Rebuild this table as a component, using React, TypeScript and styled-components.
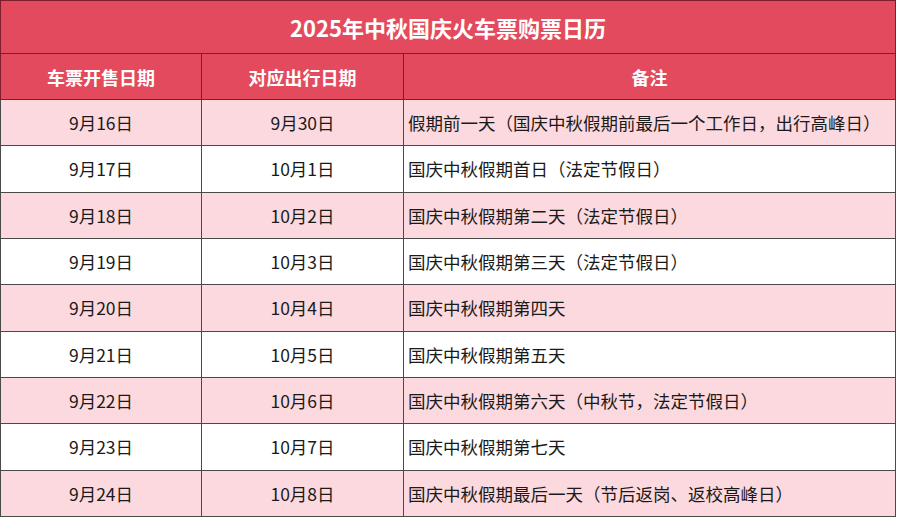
import styled, { createGlobalStyle } from 'styled-components'

const GlobalStyle = createGlobalStyle`
  html, body {
    margin: 0;
    padding: 0;
    background: #ffffff;
  }
  body {
    font-family: "Noto Sans CJK SC", "Noto Sans", sans-serif;
  }
`

interface Row {
  readonly sale: string
  readonly travel: string
  readonly note: string
}

const rows: readonly Row[] = [
  { sale: '9月16日', travel: '9月30日', note: '假期前一天（国庆中秋假期前最后一个工作日，出行高峰日）' },
  { sale: '9月17日', travel: '10月1日', note: '国庆中秋假期首日（法定节假日）' },
  { sale: '9月18日', travel: '10月2日', note: '国庆中秋假期第二天（法定节假日）' },
  { sale: '9月19日', travel: '10月3日', note: '国庆中秋假期第三天（法定节假日）' },
  { sale: '9月20日', travel: '10月4日', note: '国庆中秋假期第四天' },
  { sale: '9月21日', travel: '10月5日', note: '国庆中秋假期第五天' },
  { sale: '9月22日', travel: '10月6日', note: '国庆中秋假期第六天（中秋节，法定节假日）' },
  { sale: '9月23日', travel: '10月7日', note: '国庆中秋假期第七天' },
  { sale: '9月24日', travel: '10月8日', note: '国庆中秋假期最后一天（节后返岗、返校高峰日）' },
]

export default function App() {
  return (
    <>
      <GlobalStyle />
      <Calendar>
        <colgroup>
          <col style={{ width: 201 }} />
          <col style={{ width: 202 }} />
          <col />
        </colgroup>
        <thead>
          <tr>
            <Title colSpan={3}>2025年中秋国庆火车票购票日历</Title>
          </tr>
          <tr>
            <HeadCell>车票开售日期</HeadCell>
            <HeadCell>对应出行日期</HeadCell>
            <HeadCell>备注</HeadCell>
          </tr>
        </thead>
        <tbody>
          {rows.map((row, i) => (
            <BodyRow key={row.sale} $pink={i % 2 === 0}>
              <Cell>{row.sale}</Cell>
              <Cell>{row.travel}</Cell>
              <Cell $left>{row.note}</Cell>
            </BodyRow>
          ))}
        </tbody>
      </Calendar>
    </>
  )
}

const Calendar = styled.table`
  width: 896px;
  border-collapse: collapse;
  table-layout: fixed;
  color: #1a1a1a;
`

const Title = styled.th`
  height: 52px;
  padding: 0;
  background: #e34a5e;
  color: #ffffff;
  font-size: 22px;
  font-weight: 700;
  text-align: center;
  border: 1px solid #7c1e2c;
`

const HeadCell = styled.th`
  height: 45px;
  padding: 0;
  background: #e34a5e;
  color: #ffffff;
  font-size: 18px;
  font-weight: 700;
  text-align: center;
  border: 1px solid #7c1e2c;
`

const BodyRow = styled.tr<{ $pink: boolean }>`
  background: ${p => (p.$pink ? '#fcd9de' : '#ffffff')};
`

const Cell = styled.td<{ $left?: boolean }>`
  height: 45.33px;
  padding: 0 ${p => (p.$left ? '4px' : '0')};
  font-size: 17.5px;
  text-align: ${p => (p.$left ? 'left' : 'center')};
  white-space: nowrap;
  border: 1px solid #4a4a4a;
`
